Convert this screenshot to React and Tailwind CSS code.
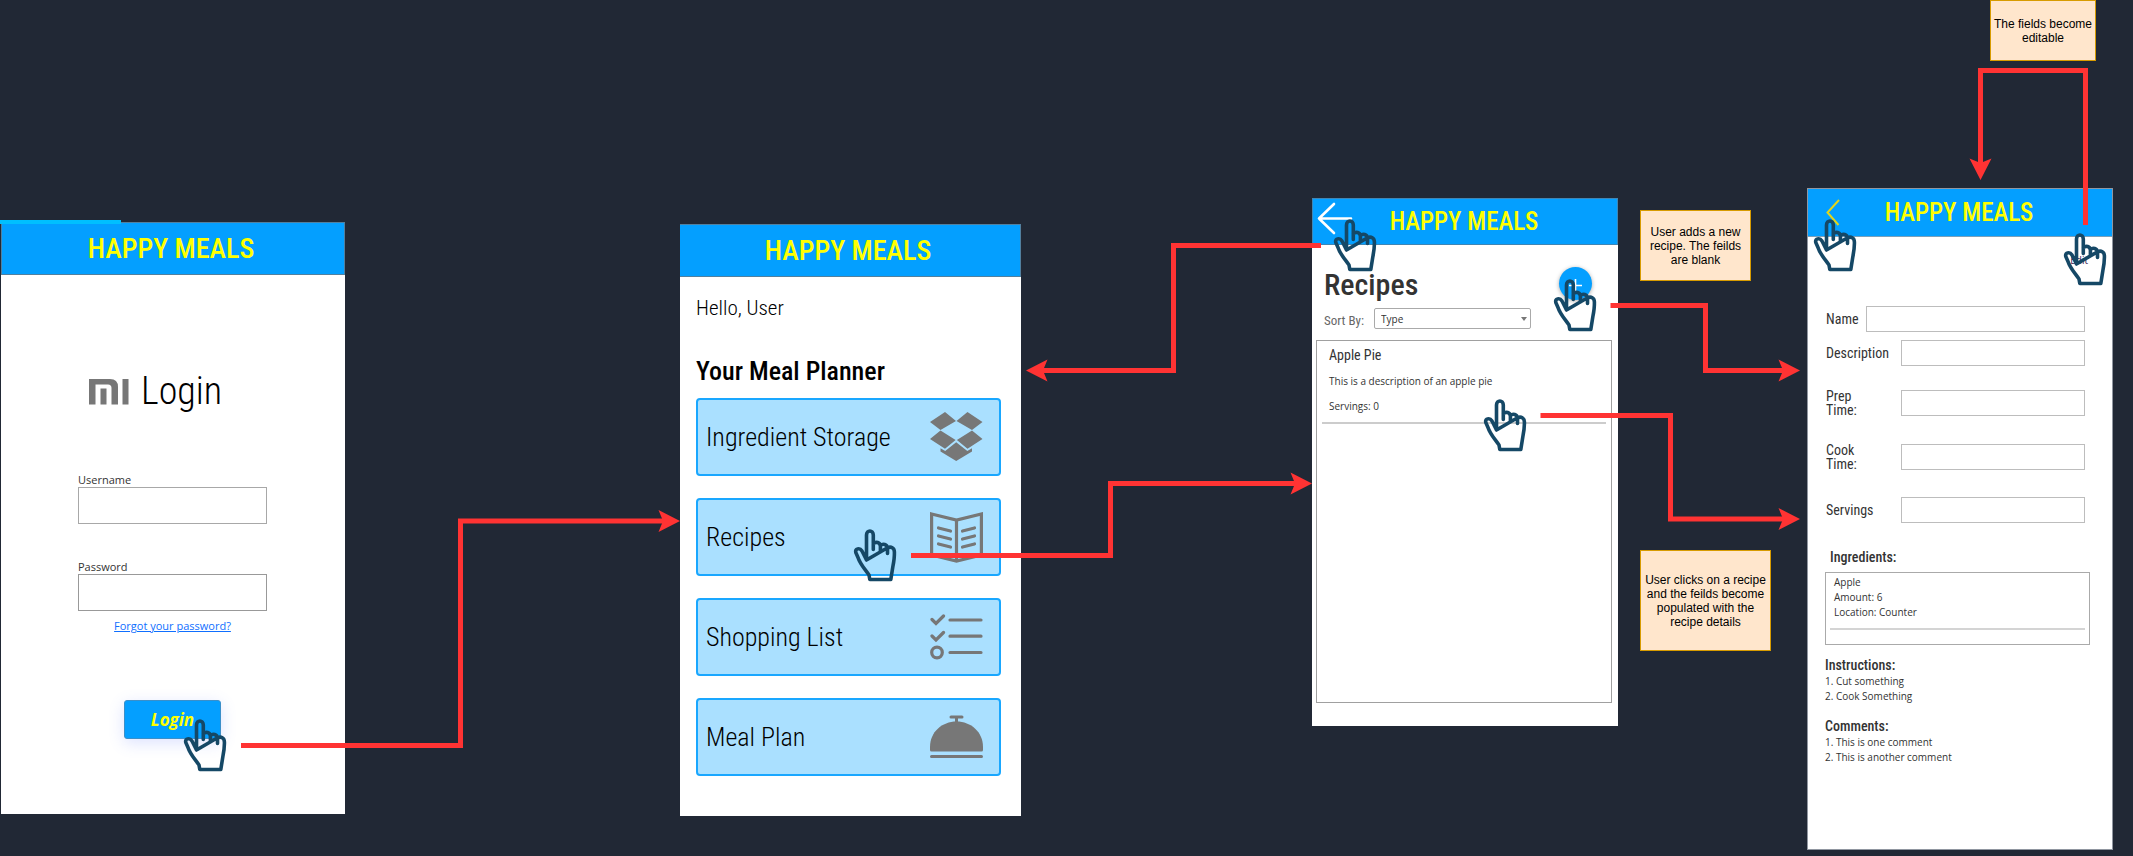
const narrow = "font-['Roboto_Condensed',Roboto,sans-serif]";
const body = "font-['Open_Sans','Noto_Sans',sans-serif]";

function Hand({ x, y }) {
  return (
    <g
      transform={`translate(${x} ${y})`}
      fill="none"
      stroke="#154866"
      strokeWidth="3.6"
      strokeLinecap="round"
      strokeLinejoin="round"
    >
      <path d="M12.5 31V6C12.5 .6 19.3 .6 19.3 6V20.5M19.3 14.5C22 12.4 26 13.2 26.4 17V23M26.4 16.5C29 14.2 33 15.4 33.5 19V24.5M33.5 18.8C37 17 40.4 19 40.4 23C40.6 29 39.8 33 38.8 38L36.8 50.5H15.8L15 46C10 39 5.8 34.5 4 28.5L1.8 23.6C.9 19.6 5.6 18.2 8 22C9.5 25 11 28 12.5 31Z" />
    </g>
  );
}

function Connector({ points, tip, angle = 0 }) {
  return (
    <g>
      <polyline points={points} fill="none" stroke="#ff3333" strokeWidth="5" />
      <path
        d="M0 0L-21.5 11L-17 0L-21.5 -11Z"
        fill="#ff3333"
        transform={`translate(${tip}) rotate(${angle})`}
      />
    </g>
  );
}

function Flow() {
  return (
    <svg
      className="pointer-events-none absolute left-0 top-0 z-10"
      width="2133"
      height="856"
      viewBox="0 0 2133 856"
      aria-hidden="true"
    >
      <Connector points="241,745.5 460.5,745.5 460.5,521 664,521" tip="680 521" />
      <Connector points="911,555.5 1110.5,555.5 1110.5,483.5 1296,483.5" tip="1312 483.5" />
      <Connector points="1321,245.5 1173.5,245.5 1173.5,370.5 1042,370.5" tip="1026 370.5" angle={180} />
      <Connector points="1610.5,305.5 1705.5,305.5 1705.5,370.5 1784,370.5" tip="1800 370.5" />
      <Connector points="1540.5,415.5 1670.5,415.5 1670.5,519 1784,519" tip="1800 519" />
      <Connector points="2085.5,225 2085.5,70.5 1980.5,70.5 1980.5,164" tip="1980.5 180" angle={90} />
      <Hand x={184} y={719} />
      <Hand x={854} y={529} />
      <Hand x={1334} y={219} />
      <Hand x={1554} y={279} />
      <Hand x={1484} y={399} />
      <Hand x={1814} y={219} />
      <Hand x={2064} y={233} />
    </svg>
  );
}

function Note({ className, children }) {
  return (
    <p
      className={`absolute flex items-center justify-center border border-[#d79b00] bg-[#ffe6cc] text-center font-['Liberation_Sans',Arial,sans-serif] text-[12px] leading-[14px] text-black ${className}`}
    >
      {children}
    </p>
  );
}

function LoginScreen() {
  return (
    <section className="absolute left-px top-[222px] h-[592px] w-[344px] bg-white">
      <div className="absolute -left-px -top-[2px] h-1 w-[121px] bg-[#00bfff]" />
      <header className="flex h-[53px] items-center justify-center border border-[#52809f] bg-[#049fff] pr-1">
        <h1 className={`${narrow} text-[28px] font-medium leading-[32px] text-[#ffff00]`}>HAPPY MEALS</h1>
      </header>
      <div className="ml-[88px] mt-[92px] flex items-center gap-3">
        <svg width="40" height="27" viewBox="0 0 40 27" fill="#777" aria-label="MI">
          <path d="M0 1H21Q29 1 29 9V26.5H22.5V10Q22.5 6.5 19 6.5H6.5V26.5H0Z" />
          <path d="M11.5 10.5H17.5V26.5H11.5ZM33.5 1H39.5V26.5H33.5Z" />
        </svg>
        <h2 className={`${narrow} text-[38px] font-light leading-[48px] text-black`}>Login</h2>
      </div>
      <form className={`ml-[77px] mt-[58px] w-[189px] ${body} text-[11px] text-[#333]`}>
        <label htmlFor="username" className="block leading-[14px]">Username</label>
        <input id="username" className="block h-[37px] w-full border border-[#a8a8a8] bg-white px-2" />
        <label htmlFor="password" className="mt-[36px] block leading-[14px]">Password</label>
        <input id="password" type="password" className="block h-[37px] w-full border border-[#999] bg-white px-2" />
        <a href="#forgot" className="mt-[7px] block text-center leading-[16px] text-[#0f6fff] underline">
          Forgot your password?
        </a>
        <button
          type="button"
          className="ml-[46px] mt-[66px] block h-[39px] w-[97px] rounded-[3px] border border-[#3b8fc9] bg-[#049fff] text-[17px] font-bold italic text-[#ffff00] shadow-[0_4px_16px_rgba(80,110,255,0.2)]"
        >
          Login
        </button>
      </form>
    </section>
  );
}

function BoxIcon() {
  return (
    <svg width="53" height="50" viewBox="0 0 53 50" fill="#777" aria-hidden="true">
      <path d="M15 0L26 9L10.5 18L0 10ZM37.5 0L52.5 10L42 18L26.5 9ZM10.5 18.6L25.6 28L15 36.8L0 27ZM42 18.6L52.5 27L37.5 36.8L26.9 28Z" />
      <path d="M26.2 30.3L37.3 39L42 36.2V39.4L26.2 49L10.5 39.4V36.2L15.2 39Z" />
    </svg>
  );
}

function BookIcon() {
  return (
    <svg width="53" height="51" viewBox="0 0 53 51" fill="none" stroke="#777" strokeWidth="3.2" aria-hidden="true">
      <path d="M1.6 2L26.5 8L51.4 2V43L26.5 49L1.6 43ZM26.5 8V49" />
      <path strokeLinecap="round" d="M8.5 16L20.5 19M8.5 24L20.5 27M8.5 32L20.5 35M44.5 16L32.5 19M44.5 24L32.5 27M44.5 32L32.5 35" />
    </svg>
  );
}

function ListIcon() {
  return (
    <svg width="53" height="46" viewBox="0 0 53 46" fill="none" stroke="#777" strokeWidth="3.2" strokeLinecap="round" aria-hidden="true">
      <path d="M2 5.5L6 9.5L13.5 2M2 22L6 26L13.5 18.5M20 6H51M20 22.2H51M20 38.5H51" />
      <circle cx="7" cy="38.5" r="5.3" />
    </svg>
  );
}

function ClocheIcon() {
  return (
    <svg width="53" height="44" viewBox="0 0 53 44" aria-hidden="true">
      <path d="M0 35V32C0 17 12 6.5 26.5 6.5S53 17 53 32V35Q53 36.5 51.5 36.5H1.5Q0 36.5 0 35Z" fill="#777" />
      <path d="M21 2H32M26.5 2V8M1.5 41.5H51.5" stroke="#777" strokeWidth="3" strokeLinecap="round" />
    </svg>
  );
}

const planner = [
  ["Ingredient Storage", BoxIcon],
  ["Recipes", BookIcon],
  ["Shopping List", ListIcon],
  ["Meal Plan", ClocheIcon],
];

function HomeScreen() {
  return (
    <section className={`absolute left-[680px] top-[224px] h-[592px] w-[341px] bg-white ${narrow} text-black`}>
      <header className="flex h-[53px] items-center justify-center border border-l-0 border-[#52809f] bg-[#049fff] pr-1">
        <h1 className="text-[28px] font-medium leading-[32px] text-[#ffff00]">HAPPY MEALS</h1>
      </header>
      <div className="pl-4 pr-5 pt-[18px]">
        <p className="text-[21px] font-light leading-[26px]">Hello, User</p>
        <h2 className="mt-[34px] text-[26px] font-medium leading-[32px]">Your Meal Planner</h2>
        <nav className="mt-[11px] flex flex-col gap-[22px]">
          {planner.map(([name, Icon]) => (
            <button
              key={name}
              type="button"
              className="flex h-[78px] items-center justify-between rounded-[4px] border-2 border-[#19a7ff] bg-[#aae0ff] pl-2 pr-4 text-[26px] font-light"
            >
              <span>{name}</span>
              <Icon />
            </button>
          ))}
        </nav>
      </div>
    </section>
  );
}

function RecipesScreen() {
  return (
    <section className="absolute left-[1312px] top-[198px] h-[528px] w-[306px] bg-white text-[#333]">
      <header className="grid h-[47px] grid-cols-[50px_1fr_50px] items-center border border-[#3f86b5] bg-[#049fff] pl-[3px] pr-[5px]">
        <button type="button" aria-label="Back" className="pl-px">
          <svg width="36" height="33" viewBox="0 0 36 33" fill="none" stroke="#fff" strokeWidth="2.6" strokeLinecap="round" strokeLinejoin="round" className="-mt-[6px]">
            <path d="M17 2L2 16.5L17 31M2 16.5H34" />
          </svg>
        </button>
        <h1 className={`${narrow} text-center text-[25px] font-medium leading-[28px] text-[#ffff00]`}>HAPPY MEALS</h1>
      </header>
      <div className="flex justify-between pl-3 pr-[26px] pt-[20px]">
        <h2 className={`${narrow} text-[30px] font-medium leading-[40px]`}>Recipes</h2>
        <button
          type="button"
          aria-label="Add recipe"
          className="mt-[2px] flex size-[33px] items-center justify-center rounded-full bg-[#049fff] shadow-[0_1px_4px_rgba(0,0,0,0.35)]"
        >
          <svg width="13" height="13" viewBox="0 0 13 13" stroke="#fff" strokeWidth="1.6" aria-hidden="true" className="mt-1">
            <path d="M0 6.5H13M6.5 0V13" />
          </svg>
        </button>
      </div>
      <div className="mt-[3px] flex items-center pl-3">
        <label htmlFor="sort" className={`${narrow} w-[50px] pt-1 text-[13px] leading-[16px] text-[#666]`}>Sort By:</label>
        <div className="relative flex w-[157px]">
          <select id="sort" className={`h-[21px] w-full appearance-none rounded-[2px] border border-[#aaa] bg-white pl-[6px] ${body} text-[10px] leading-[18px]`}>
            <option>Type</option>
          </select>
          <svg width="6" height="4" viewBox="0 0 6 4" className="pointer-events-none absolute right-1 top-[9px]" aria-hidden="true">
            <path d="M0 0H6L3 4Z" fill="#777" />
          </svg>
        </div>
      </div>
      <div className="ml-1 mr-[6px] mt-[11px] h-[363px] border border-[#a0a0a0] px-[5px] pt-[5px]">
        <article className={`border-b-2 border-[#ccc] pb-[8px] pl-[7px] ${body} text-[10px] leading-[15px]`}>
          <h3 className={`${narrow} text-[14px] leading-[18px]`}>Apple Pie</h3>
          <p className="mt-[10px]">This is a description of an apple pie</p>
          <p className="mt-[10px]">Servings: 0</p>
        </article>
      </div>
    </section>
  );
}

const fields = [
  { id: "name", lines: ["Name"], row: "mt-0 grid-cols-[40px_1fr]" },
  { id: "description", lines: ["Description"], row: "mt-[8px] grid-cols-[75px_1fr]" },
  { id: "prep", lines: ["Prep", "Time:"], row: "mt-[23px] grid-cols-[75px_1fr]" },
  { id: "cook", lines: ["Cook", "Time:"], row: "mt-[28px] grid-cols-[75px_1fr]" },
  { id: "servings", lines: ["Servings"], row: "mt-[28px] grid-cols-[75px_1fr]" },
];

function RecipeScreen() {
  return (
    <section className={`absolute left-[1807px] top-[188px] h-[662px] w-[306px] border border-[#9096a0] bg-white ${body} text-[10px] leading-[15px] text-[#333]`}>
      <header className="grid h-[48px] grid-cols-[50px_1fr_50px] items-center border-b border-[#7aa0bb] bg-[#049fff] pr-[2px]">
        <button type="button" aria-label="Back" className="pl-[18px]">
          <svg width="14" height="27" viewBox="0 0 14 27" fill="none" stroke="#e2d51a" strokeWidth="2">
            <path d="M13 1L1.5 13.5L12.5 26" />
          </svg>
        </button>
        <h1 className={`${narrow} text-center text-[25px] font-medium leading-[28px] text-[#ffff00]`}>HAPPY MEALS</h1>
      </header>
      <div className="flex justify-end pr-6 pt-4">
        <a href="#edit" className="text-[#3b2355]">Edit</a>
      </div>
      <form className="ml-[18px] mr-[27px] mt-[38px]">
        {fields.map((f) => (
          <div key={f.id} className={`grid h-[26px] items-center ${f.row}`}>
            <label htmlFor={f.id} className={`${narrow} text-[14px] leading-[14px]`}>
              {f.lines.map((line) => (
                <span key={line} className="block">{line}</span>
              ))}
            </label>
            <input id={f.id} className="h-[26px] w-full border border-[#bdbdbd] bg-white px-2" />
          </div>
        ))}
      </form>
      <div className="ml-[17px] mr-[22px]">
        <h3 className={`${narrow} ml-[5px] mt-[25px] text-[14px] font-medium leading-[18px]`}>Ingredients:</h3>
        <div className="mt-[6px] h-[73px] border border-[#aaa] px-1">
          <div className="border-b-2 border-[#d4d4d4] pb-2 pl-1 pt-[2px]">
            <p>Apple</p>
            <p>Amount: 6</p>
            <p>Location: Counter</p>
          </div>
        </div>
        <h3 className={`${narrow} mt-[11px] text-[14px] font-medium leading-[18px]`}>Instructions:</h3>
        <ol>
          <li>1. Cut something</li>
          <li>2. Cook Something</li>
        </ol>
        <h3 className={`${narrow} mt-[13px] text-[14px] font-medium leading-[18px]`}>Comments:</h3>
        <ol>
          <li>1. This is one comment</li>
          <li>2. This is another comment</li>
        </ol>
      </div>
    </section>
  );
}

export default function App() {
  return (
    <main className="relative min-h-screen overflow-hidden bg-[#212835]">
      <LoginScreen />
      <HomeScreen />
      <RecipesScreen />
      <RecipeScreen />
      <Note className="left-[1990px] top-0 h-[61px] w-[106px]">The fields become<br />editable</Note>
      <Note className="left-[1640px] top-[210px] h-[71px] w-[111px]">User adds a new<br />recipe. The feilds<br />are blank</Note>
      <Note className="left-[1640px] top-[550px] h-[101px] w-[131px]">User clicks on a recipe<br />and the feilds become<br />populated with the<br />recipe details</Note>
      <Flow />
    </main>
  );
}
